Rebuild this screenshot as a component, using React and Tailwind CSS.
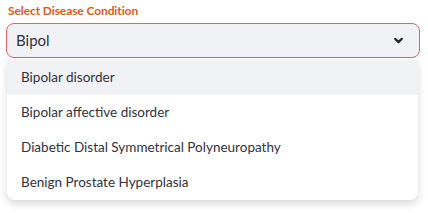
export default function App() {
  const options = [
    "Bipolar disorder",
    "Bipolar affective disorder",
    "Diabetic Distal Symmetrical Polyneuropathy",
    "Benign Prostate Hyperplasia",
  ];

  return (
    <div className="w-[428px] h-[213px] bg-white px-[6px] pt-[2px] text-[#31333f]" style={{ fontFamily: "Lato, 'Noto Sans', sans-serif" }}>
      {/* Label */}
      <div className="pl-[2px] text-[12px] font-bold leading-[17px] tracking-[-0.1px] text-[#dc5a22]">Select Disease Condition</div>

      {/* Select box */}
      <div className="mt-[4px] h-[35px] w-[414px] flex items-center justify-between rounded-[8px] border border-[#e0636c] bg-[#f0f2f6] pl-[9px] pr-[14px]">
        <span className="text-[15px]">Bipol</span>
        <svg width="13" height="13" viewBox="0 0 24 24" fill="none" stroke="#262730" strokeWidth="4" strokeLinecap="round" strokeLinejoin="round">
          <path d="M6 9l6 6 6-6" />
        </svg>
      </div>

      {/* Dropdown */}
      <div className="mt-[2px] ml-[1px] w-[411px] overflow-hidden rounded-b-[8px] bg-white shadow-[0_4px_8px_rgba(0,0,0,0.15)]">
        {options.map((o, i) => (
          <div
            key={o}
            className={"h-[35px] flex items-center pl-[14px] text-[13.5px] " + (i === 0 ? "bg-[#f0f2f6]" : "")}
          >
            {o}
          </div>
        ))}
      </div>
    </div>
  );
}
